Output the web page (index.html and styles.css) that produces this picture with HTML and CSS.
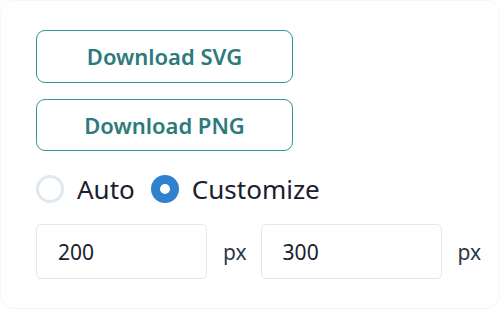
FILE: index.html
```html
<!DOCTYPE html>
<html lang="en">
<head>
    <meta charset="UTF-8">
    <meta name="viewport" content="width=device-width, initial-scale=1.0">
    <title>Export</title>
    <link rel="stylesheet" href="styles.css">
</head>
<body>
    <div class="card">
        <button class="btn">Download SVG</button>
        <button class="btn">Download PNG</button>

        <div class="radio-row">
            <label class="radio">
                <input type="radio" name="size" value="auto">
                <span class="dot"></span>
                <span class="radio-label">Auto</span>
            </label>
            <label class="radio">
                <input type="radio" name="size" value="custom" checked>
                <span class="dot"></span>
                <span class="radio-label">Customize</span>
            </label>
        </div>

        <div class="size-row">
            <input class="size-input" type="text" value="200">
            <span class="unit">px</span>
            <input class="size-input wide" type="text" value="300">
            <span class="unit">px</span>
        </div>
    </div>
</body>
</html>
```

FILE: styles.css
```css
body {
    margin: 0;
    background-color: #fff;
    font-family: "Noto Sans", "Open Sans", sans-serif;
    color: #1a202c;
}
.card {
    box-sizing: border-box;
    width: 500px;
    height: 309px;
    border: 1px solid #f6f6f6;
    border-radius: 14px;
    padding: 29px 35px;
    display: flex;
    flex-direction: column;
    align-items: flex-start;
}
.btn {
    width: 257px;
    height: 53px;
    background: #fff;
    border: 1.5px solid #319795;
    border-radius: 9px;
    color: #2c7a7b;
    font-family: inherit;
    font-size: 22px;
    font-weight: 600;
    cursor: pointer;
    margin-bottom: 16px;
}
.radio-row {
    display: flex;
    align-items: center;
    margin-top: 4px;
}
.radio {
    display: flex;
    align-items: center;
    margin-right: 16px;
    cursor: pointer;
}
.radio input {
    display: none;
}
.dot {
    box-sizing: border-box;
    width: 28px;
    height: 28px;
    border-radius: 50%;
    border: 3px solid #e2e8f0;
    margin-right: 13px;
}
.radio input:checked + .dot {
    border: 9px solid #3182ce;
    background: #fff;
}
.radio-label {
    font-size: 26px;
    color: #1a202c;
}
.size-row {
    display: flex;
    align-items: center;
    margin-top: 17px;
}
.size-input {
    box-sizing: border-box;
    width: 171px;
    height: 55px;
    border: 1.5px solid #e2e8f0;
    border-radius: 5px;
    padding: 0 21px;
    font-family: inherit;
    font-size: 21px;
    color: #1a202c;
}
.size-input.wide {
    width: 181px;
}
.unit {
    font-size: 21px;
    color: #2d3748;
    margin: 0 14px 0 16px;
}
```
